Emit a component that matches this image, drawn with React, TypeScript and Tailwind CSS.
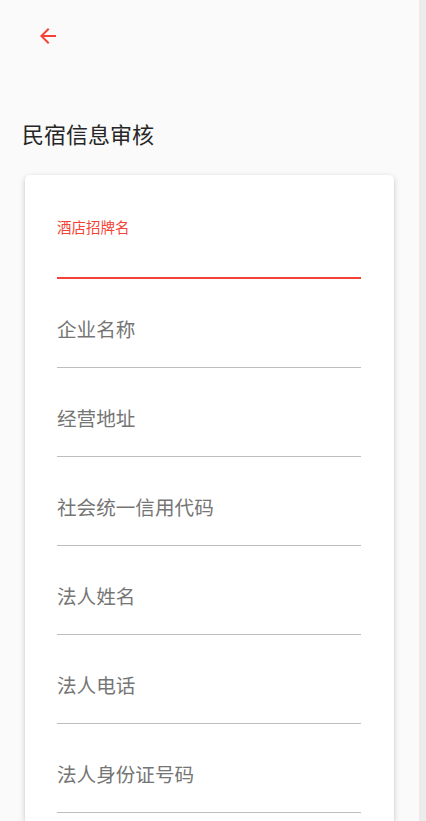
import React from "react";

const fields = ["企业名称", "经营地址", "社会统一信用代码", "法人姓名", "法人电话", "法人身份证号码"];

function BackIcon() {
  return (
    <svg width="24" height="24" viewBox="0 0 24 24" fill="#f44336">
      <path d="M20 11H7.83l5.59-5.59L12 4l-8 8 8 8 1.41-1.41L7.83 13H20v-2z" />
    </svg>
  );
}

export default function App() {
  return (
    <div
      className="flex h-[821px] w-full overflow-hidden bg-[#fafafa]"
      style={{ fontFamily: '"Noto Sans", "Noto Sans CJK SC", sans-serif' }}
    >
      <div className="flex-1 flex flex-col">
        {/* 顶部返回 */}
        <div className="h-[72px] flex items-center pl-[36px]">
          <button className="w-6 h-6 flex items-center justify-center">
            <BackIcon />
          </button>
        </div>

        <h1 className="mt-[46px] pl-[22px] text-[22px] leading-8 text-[#262626] font-normal">
          民宿信息审核
        </h1>

        {/* 表单卡片 */}
        <div className="mt-[25px] mx-[25px] flex-1 bg-white rounded-t-[5px] shadow-[0_2px_6px_rgba(0,0,0,0.18),0_1px_2px_rgba(0,0,0,0.08)] pl-8 pr-[33px] pt-[15px]">
          <div className="h-[89px] border-b-2 border-[#f44336] pt-[29px]">
            <label className="block text-[14.5px] leading-4 text-[#f44336]">酒店招牌名</label>
          </div>
          {fields.map((f) => (
            <div key={f} className="h-[89px] border-b border-[#bdbdbd] flex items-end pb-[25px]">
              <span className="text-[19.6px] leading-6 text-[#757575]">{f}</span>
            </div>
          ))}
        </div>
      </div>
      <div className="w-[7px] bg-[#ececec]" />
    </div>
  );
}
